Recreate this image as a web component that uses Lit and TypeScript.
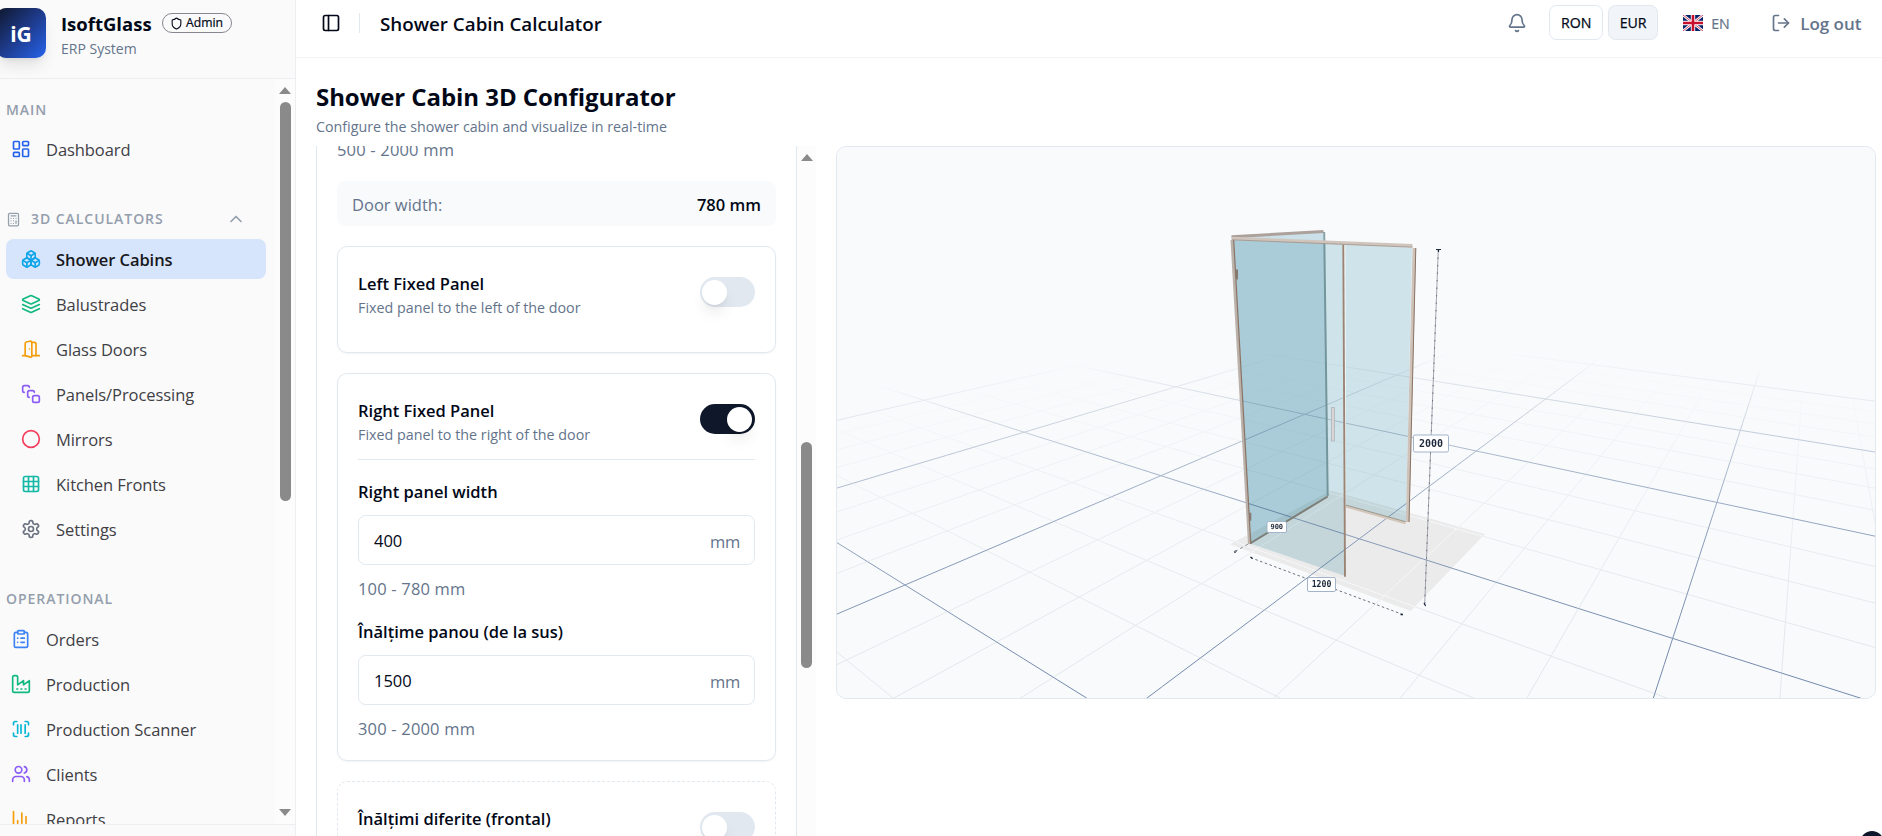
import { LitElement, html, css, svg } from "lit";
import { customElement, state } from "lit/decorators.js";
import { classMap } from "lit/directives/class-map.js";

const ICONS: Record<string, any> = {
  dashboard: svg`<rect width="7" height="9" x="3" y="3" rx="1"/><rect width="7" height="5" x="14" y="3" rx="1"/><rect width="7" height="9" x="14" y="12" rx="1"/><rect width="7" height="5" x="3" y="16" rx="1"/>`,
  calculator: svg`<rect width="16" height="20" x="4" y="2" rx="2"/><path d="M8 6h8M16 14v4M16 10h.01M12 10h.01M8 10h.01M12 14h.01M8 14h.01M12 18h.01M8 18h.01"/>`,
  boxes: svg`<path d="M2.97 12.92A2 2 0 0 0 2 14.63v3.24a2 2 0 0 0 .97 1.71l3 1.8a2 2 0 0 0 2.06 0L12 19v-5.5l-5-3-4.03 2.42Z"/><path d="m7 16.5-4.74-2.85"/><path d="m7 16.5 5-3"/><path d="M7 16.5v5.17"/><path d="M12 13.5V19l3.97 2.38a2 2 0 0 0 2.06 0l3-1.8a2 2 0 0 0 .97-1.71v-3.24a2 2 0 0 0-.97-1.71L17 10.5l-5 3Z"/><path d="m17 16.5-5-3"/><path d="m17 16.5 4.74-2.85"/><path d="M17 16.5v5.17"/><path d="M7.97 4.42A2 2 0 0 0 7 6.13v4.37l5 3 5-3V6.13a2 2 0 0 0-.97-1.71l-3-1.8a2 2 0 0 0-2.06 0l-3 1.8Z"/><path d="M12 8 7.26 5.15"/><path d="m12 8 4.74-2.85"/><path d="M12 13.5V8"/>`,
  layers: svg`<path d="m12.83 2.18a2 2 0 0 0-1.66 0L2.6 6.08a1 1 0 0 0 0 1.83l8.58 3.91a2 2 0 0 0 1.66 0l8.58-3.9a1 1 0 0 0 0-1.83Z"/><path d="m22 17.65-9.17 4.16a2 2 0 0 1-1.66 0L2 17.65"/><path d="m22 12.65-9.17 4.16a2 2 0 0 1-1.66 0L2 12.65"/>`,
  door: svg`<path d="M13 4h3a2 2 0 0 1 2 2v14"/><path d="M2 20h3"/><path d="M13 20h9"/><path d="M10 12v.01"/><path d="M13 4.562v16.157a1 1 0 0 1-1.242.97L5 20V5.562a2 2 0 0 1 1.515-1.94l4-1A2 2 0 0 1 13 4.561Z"/>`,
  stack: svg`<path d="M4 10c-1.1 0-2-.9-2-2V4c0-1.1.9-2 2-2h4c1.1 0 2 .9 2 2"/><path d="M10 16c-1.1 0-2-.9-2-2v-4c0-1.1.9-2 2-2h4c1.1 0 2 .9 2 2"/><rect width="8" height="8" x="14" y="14" rx="2"/>`,
  circle: svg`<circle cx="12" cy="12" r="10"/>`,
  grid: svg`<rect width="18" height="18" x="3" y="3" rx="2"/><path d="M3 9h18M3 15h18M9 3v18M15 3v18"/>`,
  settings: svg`<path d="M12.22 2h-.44a2 2 0 0 0-2 2v.18a2 2 0 0 1-1 1.73l-.43.25a2 2 0 0 1-2 0l-.15-.08a2 2 0 0 0-2.73.73l-.22.38a2 2 0 0 0 .73 2.73l.15.1a2 2 0 0 1 1 1.72v.51a2 2 0 0 1-1 1.74l-.15.09a2 2 0 0 0-.73 2.73l.22.38a2 2 0 0 0 2.73.73l.15-.08a2 2 0 0 1 2 0l.43.25a2 2 0 0 1 1 1.73V20a2 2 0 0 0 2 2h.44a2 2 0 0 0 2-2v-.18a2 2 0 0 1 1-1.73l.43-.25a2 2 0 0 1 2 0l.15.08a2 2 0 0 0 2.73-.73l.22-.39a2 2 0 0 0-.73-2.73l-.15-.08a2 2 0 0 1-1-1.74v-.5a2 2 0 0 1 1-1.74l.15-.09a2 2 0 0 0 .73-2.73l-.22-.38a2 2 0 0 0-2.73-.73l-.15.08a2 2 0 0 1-2 0l-.43-.25a2 2 0 0 1-1-1.73V4a2 2 0 0 0-2-2z"/><circle cx="12" cy="12" r="3"/>`,
  clipboard: svg`<rect width="8" height="4" x="8" y="2" rx="1"/><path d="M16 4h2a2 2 0 0 1 2 2v14a2 2 0 0 1-2 2H6a2 2 0 0 1-2-2V6a2 2 0 0 1 2-2h2M12 11h4M12 16h4M8 11h.01M8 16h.01"/>`,
  factory: svg`<path d="M2 20a2 2 0 0 0 2 2h16a2 2 0 0 0 2-2V8l-7 5V8l-7 5V4a2 2 0 0 0-2-2H4a2 2 0 0 0-2 2Z"/><path d="M17 18h1M12 18h1M7 18h1"/>`,
  scanner: svg`<path d="M3 7V5a2 2 0 0 1 2-2h2"/><path d="M17 3h2a2 2 0 0 1 2 2v2"/><path d="M21 17v2a2 2 0 0 1-2 2h-2"/><path d="M7 21H5a2 2 0 0 1-2-2v-2"/><path d="M8 7v10M12 7v10M17 7v10"/>`,
  users: svg`<path d="M16 21v-2a4 4 0 0 0-4-4H6a4 4 0 0 0-4 4v2"/><circle cx="9" cy="7" r="4"/><path d="M22 21v-2a4 4 0 0 0-3-3.87"/><path d="M16 3.13a4 4 0 0 1 0 7.75"/>`,
  chart: svg`<path d="M3 3v16a2 2 0 0 0 2 2h16"/><path d="M18 17V9M13 17V5M8 17v-3"/>`,
  panel: svg`<rect width="18" height="18" x="3" y="3" rx="2"/><path d="M9 3v18"/>`,
  bell: svg`<path d="M10.268 21a2 2 0 0 0 3.464 0"/><path d="M3.262 15.326A1 1 0 0 0 4 17h16a1 1 0 0 0 .74-1.673C19.41 13.956 18 12.499 18 8A6 6 0 0 0 6 8c0 4.499-1.411 5.956-2.738 7.326"/>`,
  logout: svg`<path d="M9 21H5a2 2 0 0 1-2-2V5a2 2 0 0 1 2-2h4"/><path d="m16 17 5-5-5-5"/><path d="M21 12H9"/>`,
  shield: svg`<path d="M20 13c0 5-3.5 7.5-7.66 8.95a1 1 0 0 1-.67-.01C7.5 20.5 4 18 4 13V6a1 1 0 0 1 1-1c2 0 4.5-1.2 6.24-2.72a1.17 1.17 0 0 1 1.52 0C14.51 3.81 17 5 19 5a1 1 0 0 1 1 1z"/>`,
  chevronUp: svg`<path d="m18 15-6-6-6 6"/>`,
};

const icon = (name: string, color = "currentColor", size = 20) => html`<svg
  class="icon" width=${size} height=${size} viewBox="0 0 24 24" fill="none"
  stroke=${color} stroke-width="2" stroke-linecap="round" stroke-linejoin="round">${ICONS[name]}</svg>`;

type Item = { icon: string; color: string; label: string };

const CALCULATORS: Item[] = [
  { icon: "boxes", color: "#0ea5e9", label: "Shower Cabins" },
  { icon: "layers", color: "#10b981", label: "Balustrades" },
  { icon: "door", color: "#f59e0b", label: "Glass Doors" },
  { icon: "stack", color: "#8b5cf6", label: "Panels/Processing" },
  { icon: "circle", color: "#f43f5e", label: "Mirrors" },
  { icon: "grid", color: "#14b8a6", label: "Kitchen Fronts" },
  { icon: "settings", color: "#6b7280", label: "Settings" },
];

const OPERATIONAL: Item[] = [
  { icon: "clipboard", color: "#3b82f6", label: "Orders" },
  { icon: "factory", color: "#10b981", label: "Production" },
  { icon: "scanner", color: "#06b6d4", label: "Production Scanner" },
  { icon: "users", color: "#8b5cf6", label: "Clients" },
  { icon: "chart", color: "#f59e0b", label: "Reports" },
];

type Pt = [number, number];

/* Projective map from the unit square onto a quadrilateral (p00, p10, p11, p01). */
function projector(a: Pt, b: Pt, c: Pt, d: Pt) {
  const sx = a[0] - b[0] + c[0] - d[0];
  const sy = a[1] - b[1] + c[1] - d[1];
  const dx1 = b[0] - c[0], dx2 = d[0] - c[0];
  const dy1 = b[1] - c[1], dy2 = d[1] - c[1];
  const det = dx1 * dy2 - dx2 * dy1;
  const g = (sx * dy2 - dx2 * sy) / det;
  const h = (dx1 * sy - sx * dy1) / det;
  return (u: number, v: number): [number, number, number] => {
    const w = g * u + h * v + 1;
    return [
      ((b[0] - a[0] + g * b[0]) * u + (d[0] - a[0] + h * d[0]) * v + a[0]) / w,
      ((b[1] - a[1] + g * b[1]) * u + (d[1] - a[1] + h * d[1]) * v + a[1]) / w,
      w,
    ];
  };
}

const project = projector([905, 585], [1558.1, 991.4], [1740.3, 430.3], [1396.7, 375]);
/* Floor coordinates count whole sections; the reference square spans i 2..4 and j 0..3. */
const floor = (i: number, j: number) => project((i - 2) / 2, j / 3);

function floorLine(alongI: boolean, k: number) {
  const pts: string[] = [];
  for (let t = -8; t <= 14; t += 0.125) {
    const [x, y, w] = alongI ? floor(t, k) : floor(k, t);
    if (w > 0.05 && Math.abs(x) < 6000 && y < 4000 && y > 300) pts.push(`${x.toFixed(1)},${y.toFixed(1)}`);
  }
  return pts.join(" ");
}

const MAJOR: string[] = [];
const MINOR: string[] = [];
for (let n = -16; n <= 40; n++) {
  const target = n % 4 === 0 ? MAJOR : MINOR;
  target.push(floorLine(true, n / 4), floorLine(false, n / 4));
}

@customElement("app-root")
export class AppRoot extends LitElement {
  @state() private currency = "EUR";
  @state() private leftPanel = false;
  @state() private rightPanel = true;

  static styles = css`
    :host { display: block; height: 100vh; overflow: hidden; background: #fff; color: #020817;
      font-family: "Open Sans", "Noto Sans", sans-serif; font-size: 16.5px; line-height: 24px; }
    * { box-sizing: border-box; }
    .icon { display: block; flex: none; }
    .app { display: grid; grid-template-columns: 296px 1fr; height: 836px; overflow: hidden; position: relative; }
    .sidebar { background: #fafafa; border-right: 1px solid #eceef2; display: grid; grid-template-rows: 79px 1fr 12px; min-height: 0; overflow: hidden; }
    .brand { display: flex; border-bottom: 1px solid #eceef2; padding-top: 8px; }
    .logo { width: 50px; height: 50px; margin-left: -4px; border-radius: 10px; background: linear-gradient(135deg, #0f172a, #1e3a8a 50%, #2563eb);
      color: #fff; font-weight: 700; font-size: 21px; padding-top: 1px; display: flex; align-items: center; justify-content: center; box-shadow: 0 10px 15px -3px #0000001a, 0 4px 6px -4px #0000001a; }
    .brand-text { margin-left: 15px; padding-top: 3px; }
    .brand-row { display: flex; align-items: center; height: 26px; }
    .brand-name { font-weight: 700; font-size: 18.5px; letter-spacing: 0; }
    .badge { margin-left: 10px; margin-top: -2px; height: 20px; width: 70px; border: 1px solid #85888f; border-radius: 10px; display: flex; align-items: center; justify-content: center; gap: 3px; font-size: 12.2px; font-weight: 500; -webkit-text-stroke: 0.2px; }
    .brand-sub { font-size: 14px; line-height: 20px; color: #64748b; padding-top: 2px; }
    .nav-wrap { display: grid; grid-template-columns: 1fr 20px; min-height: 0; overflow: hidden; }
    .nav { padding-left: 6px; min-height: 0; overflow: hidden; display: flex; flex-direction: column; }
    .section { color: #949eac; font-size: 14px; font-weight: 600; letter-spacing: 0.95px; height: 20px; line-height: 20px; flex: none; display: flex; align-items: center; }
    .section.main { margin-top: 21px; }
    .section.calc { margin-top: 40px; }
    .section.calc span { margin-left: 10px; flex: 1; }
    .section.calc .icon:last-child { margin-right: 29px; }
    .section.oper { margin-top: 40px; }
    .items { display: flex; flex-direction: column; gap: 5px; flex: none; }
    .item { height: 40px; display: flex; align-items: center; padding-left: 5px; color: #3f3f46; letter-spacing: -0.07px; }
    .item span { margin-left: 15px; padding-top: 2px; white-space: nowrap; }
    .main-items { margin-top: 9px; }
    .calc-items { margin-top: 10px; width: 260px; }
    .calc-items .item { padding-left: 15px; border-radius: 7.5px; }
    .oper-items { margin-top: 10px; }
    .item.active { background: #d7e5fc; color: #18181b; font-weight: 600; }
    .scrollbar { background: #fcfcfc; display: flex; flex-direction: column; align-items: center; }
    .arrow-up, .arrow-down { width: 0; height: 0; border-left: 6.5px solid transparent; border-right: 6.5px solid transparent; flex: none; }
    .arrow-up { border-bottom: 7px solid #8a8a8a; }
    .arrow-down { border-top: 7px solid #8a8a8a; }
    .thumb { width: 11px; border-radius: 6px; background: #8a8a8a; flex: none; }
    .nav-wrap .arrow-up { margin-top: 8px; }
    .nav-wrap .thumb { margin-top: 8px; height: 399px; }
    .nav-wrap .arrow-down { margin-top: auto; margin-bottom: 8px; }
    .side-foot { border-top: 1px solid #eceef2; }

    .content { display: grid; grid-template-rows: 58px 1fr; min-width: 0; min-height: 0; }
    .topbar { border-bottom: 1px solid #f1f2f5; display: flex; align-items: center; padding: 0 20.5px 12px 25px; }
    .sep { width: 1px; height: 20px; background: #e2e8f0; margin: 0 20px 0 18px; }
    .page-title { font-size: 18.8px; font-weight: 600; flex: 1; padding-top: 2px; }
    .muted { color: #64748b; }
    .cur { height: 35px; border: 1px solid #e2e8f0; border-radius: 7.5px; font-size: 14.2px; font-weight: 500; display: flex; align-items: center; justify-content: center; background: #fff; padding-top: 1.5px; -webkit-text-stroke: 0.25px; }
    .cur.ron { width: 54px; margin-left: 22px; }
    .cur.eur { width: 50px; margin-left: 5px; }
    .cur.on { background: #f1f5f9; }
    .flag { width: 20px; height: 16px; margin-left: 25px; display: block; }
    .lang { margin-left: 8px; font-size: 14.2px; width: 19px; padding-top: 2px; -webkit-text-stroke: 0.2px; }
    .out { display: flex; align-items: center; margin-left: 41px; font-weight: 600; font-size: 17px; }
    .out span { margin-left: 9px; padding-top: 2px; }

    .page { display: grid; grid-template-rows: 88px 1fr; padding-left: 20px; min-height: 0; }
    .h1 { font-size: 24px; font-weight: 700; line-height: 32px; margin-top: 23px; letter-spacing: -0.06px; }
    .sub { font-size: 14.25px; line-height: 20px; color: #64748b; margin-top: 4px; }
    .cols { display: grid; grid-template-columns: 500px 1040px; gap: 20px; min-height: 0; overflow: hidden; align-items: start; }
    .form-wrap { display: grid; grid-template-columns: 481px 19px; height: 690px; overflow: hidden; }
    .form { border-left: 1px solid #e2e8f0; border-right: 1px solid #e2e8f0; padding: 0 20px; overflow: hidden; display: flex; flex-direction: column; }
    .form > * { flex: none; }
    .hint { color: #64748b; letter-spacing: 0.18px; }
    .form > .hint { margin-top: -8px; }
    .door { margin-top: 19px; height: 45px; background: #f8fafc; border-radius: 8px; display: flex; align-items: center; justify-content: space-between; padding: 2px 15px 0; }
    .door b { font-weight: 600; }
    .card { border: 1px solid #e2e8f0; border-radius: 10px; margin-top: 20px; padding: 25px 20px 0; box-shadow: 0 1px 2px #0000000d; }
    .card.left { height: 107px; }
    .card.right { height: 388px; }
    .card.dashed { border-style: dashed; height: 110px; box-shadow: none; }
    .head { display: flex; justify-content: space-between; }
    .title { font-weight: 600; }
    .desc { font-size: 14.3px; line-height: 22px; color: #64748b; padding-top: 1px; }
    .switch { width: 55px; height: 30px; border-radius: 15px; background: #e2e8f0; padding: 2.5px 2px; display: flex; margin-top: 5px; }
    .switch.on { background: #0f172a; justify-content: flex-end; padding-right: 3px; }
    .knob { width: 25px; height: 25px; border-radius: 50%; background: #fff; box-shadow: 0 10px 15px -3px #0000001a, 0 4px 6px -4px #0000001a; }
    .rule { height: 1px; background: #e2e8f0; margin: 13px 0 20px; }
    .label { font-weight: 600; line-height: 24px; }
    .input { height: 50px; border: 1px solid #e2e8f0; border-radius: 7.5px; margin: 11px 0 12px; display: flex; align-items: center; justify-content: space-between; padding: 2px 14px 0 15px; }
    .input .muted { padding-top: 1px; letter-spacing: -0.3px; }
    .gap { height: 19px; }
    .track { background: #fcfcfc; display: flex; flex-direction: column; align-items: center; }
    .track .arrow-up { margin-top: 8px; }
    .track .thumb { margin-top: 281px; height: 226px; }
    .viewer { height: 553px; border: 1px solid #e2e8f0; border-radius: 10px; overflow: hidden; background: #f8fafc; }
    .scene { display: block; width: 1038px; height: 551px; isolation: isolate; background: #f8fafc; }
    .glass { fill: #d5e9ed; mix-blend-mode: multiply; }
    .glass.side { fill: #d1e5ec; }
    .major { fill: none; stroke: url(#majorFade); stroke-width: 1; }
    .minor { fill: none; stroke: url(#minorFade); stroke-width: 1; }
    .onfloor { fill: none; stroke: #fbfcfe; stroke-width: 1; stroke-dasharray: 2 1; }
    .tag { fill: #fff; stroke: #a3b3ca; }
    .tagtext { font-family: "DejaVu Sans Mono", "Liberation Mono", monospace; font-weight: 700; fill: #1e293b; text-anchor: middle; }
    .fab { position: absolute; width: 24px; height: 24px; border-radius: 50%; background: #0f172a; left: 1860px; top: 831px; }
  `;

  private item(it: Item, active = false) {
    return html`<div class=${classMap({ item: true, active })}>${icon(it.icon, it.color)}<span>${it.label}</span></div>`;
  }

  private toggle(on: boolean, flip: () => void) {
    return html`<div class=${classMap({ switch: true, on })} @click=${flip}><div class="knob"></div></div>`;
  }

  private field(label: string, value: string, hint: string) {
    return html`<div class="label">${label}</div>
      <div class="input"><span>${value}</span><span class="muted">mm</span></div>
      <div class="hint">${hint}</div>`;
  }

  private tag(x: number, y: number, w: number, h: number, size: number, text: string) {
    return svg`<rect class="tag" x=${x} y=${y} width=${w} height=${h} rx="1.5"/>
      <text class="tagtext" x=${x + w / 2} y=${y + h / 2 + size * 0.3} font-size=${size}>${text}</text>`;
  }

  private scene() {
    return html`<svg class="scene" viewBox="837 147 1038 551">
      <defs>
        <radialGradient id="majorFade" gradientUnits="userSpaceOnUse" cx="1400" cy="4250" r="3900">
          <stop offset="0" stop-color="#7389ab"/><stop offset="0.92" stop-color="#7389ab"/>
          <stop offset="0.955" stop-color="#8a9cb9"/><stop offset="0.975" stop-color="#adbacd"/>
          <stop offset="0.988" stop-color="#d2d9e3"/><stop offset="1" stop-color="#f8fafc"/>
        </radialGradient>
        <radialGradient id="minorFade" gradientUnits="userSpaceOnUse" cx="1400" cy="4250" r="3900">
          <stop offset="0" stop-color="#e3e5e9"/><stop offset="0.93" stop-color="#e4e7eb"/>
          <stop offset="0.97" stop-color="#edf0f3"/><stop offset="1" stop-color="#f8fafc"/>
        </radialGradient>
        <clipPath id="tray"><polygon points="1230,544.3 1331,490.5 1485,534 1410.7,611"/></clipPath>
      </defs>
      ${MINOR.map((p) => svg`<polyline class="minor" points=${p}/>`)}
      <polygon points="1230,544.3 1331,490.5 1485,534 1410.7,611" fill="#ebebeb"/>
      <g clip-path="url(#tray)">${MINOR.map((p) => svg`<polyline class="onfloor" points=${p}/>`)}</g>
      ${MAJOR.map((p) => svg`<polyline class="major" points=${p}/>`)}
      <polygon class="glass side" points="1232,237.5 1324,232 1327.5,496 1250,543.5"/>
      <path d="M1231.5 236.8 1323.5 231.5" stroke="#ada19c" stroke-width="3"/>
      <path d="M1250 543.5 1327.7 496.5" stroke="#94897f" stroke-width="2"/>
      <path d="M1324.2 232 1327.7 496" stroke="#8aa3a8" stroke-width="2"/>
      <polygon class="glass" points="1345,244.5 1412,247.5 1406,522 1345.7,505.5"/>
      <path d="M1345.7 506.3 1405.5 523" stroke="#d3c6ba" stroke-width="2.4"/>
      <path d="M1345.7 505 1405.5 521.7" stroke="#8e8c80" stroke-width="0.8"/>
      <polygon class="glass" points="1233,240 1343.5,244 1345,576 1250,543.5"/>
      <path d="M1235.5 269.5h2.5v10h-2.5zM1248.7 512.7h2.6v8h-2.6z" fill="#857a72"/>
      <path d="M1232 240 1249.5 544" stroke="#bbb2ab" stroke-width="3"/>
      <path d="M1233.7 240 1250.8 544" stroke="#8b7465" stroke-width="1.2"/>
      <path d="M1345 245 1345.6 505" stroke="#eef6f8" stroke-width="1"/>
      <path d="M1343.3 244.5 1345 576.7" stroke="#9c8475" stroke-width="1.9"/>
      <path d="M1414.3 248 1407.6 522" stroke="#cec2b9" stroke-width="3.6"/>
      <path d="M1415.8 248 1409 522" stroke="#8b7465" stroke-width="1"/>
      <path d="M1231.7 238.3 1412.5 245.7" stroke="#cfc5bd" stroke-width="3.2"/>
      <path d="M1231.7 239.8 1412.5 247.2" stroke="#a08f84" stroke-width="0.8"/>
      <rect x="1331.5" y="407.5" width="3" height="33.5" fill="#d9d5d6" stroke="#a9b0b5" stroke-width="0.7"/>
      <path d="M1438.3 250 1424.7 605" stroke="#a3a6ae" stroke-width="1"/>
      <path d="M1438.3 250 1424.7 605" stroke="#6b7080" stroke-width="1" stroke-dasharray="1.5 6"/>
      <path d="M1436 249.5h5M1438.5 249v3M1424 603l1.6 3" stroke="#1e293b" stroke-width="1.2"/>
      <path d="M1250.7 557.7 1402.3 614.3" stroke="#5b606b" stroke-width="0.9" stroke-dasharray="2.5 2.5"/>
      <path d="M1250.5 557l2 1.5M1400.5 614.5h2.5M1235 553v-1.5l2-1" stroke="#1e293b" stroke-width="1.3" fill="none"/>
      <path d="M1235 551.7 1249 543.5" stroke="#8b8f98" stroke-width="1" stroke-dasharray="3 3"/>
      ${this.tag(1413.5, 435, 35, 17, 10, "2000")}
      ${this.tag(1307.5, 577.5, 28, 14, 8.2, "1200")}
      ${this.tag(1267, 521.5, 19.5, 11, 7, "900")}
    </svg>`;
  }

  render() {
    return html`<div class="app">
      <div class="sidebar">
        <div class="brand">
          <div class="logo">iG</div>
          <div class="brand-text">
            <div class="brand-row"><span class="brand-name">IsoftGlass</span>
              <span class="badge">${icon("shield", "#020817", 13)}<span>Admin</span></span></div>
            <div class="brand-sub">ERP System</div>
          </div>
        </div>
        <div class="nav-wrap">
          <div class="nav">
            <div class="section main">MAIN</div>
            <div class="items main-items">${this.item({ icon: "dashboard", color: "#2563eb", label: "Dashboard" })}</div>
            <div class="section calc">${icon("calculator", "currentColor", 15)}<span>3D CALCULATORS</span>${icon("chevronUp")}</div>
            <div class="items calc-items">${CALCULATORS.map((it, n) => this.item(it, n === 0))}</div>
            <div class="section oper">OPERATIONAL</div>
            <div class="items oper-items">${OPERATIONAL.map((it) => this.item(it))}</div>
          </div>
          <div class="scrollbar"><div class="arrow-up"></div><div class="thumb"></div><div class="arrow-down"></div></div>
        </div>
        <div class="side-foot"></div>
      </div>
      <div class="content">
        <div class="topbar">
          ${icon("panel", "#020817")}<div class="sep"></div>
          <div class="page-title">Shower Cabin Calculator</div>
          ${icon("bell", "#64748b")}
          <div class=${classMap({ cur: true, ron: true, on: this.currency === "RON" })} @click=${() => (this.currency = "RON")}>RON</div>
          <div class=${classMap({ cur: true, eur: true, on: this.currency === "EUR" })} @click=${() => (this.currency = "EUR")}>EUR</div>
          <svg class="flag" viewBox="0 0 20 16">
            <rect width="20" height="16" fill="#012169"/>
            <path d="M0 0 20 16M20 0 0 16" stroke="#fff" stroke-width="2.6"/>
            <path d="M0 0 20 16M20 0 0 16" stroke="#d8455f" stroke-width="1"/>
            <path d="M10 0v16M0 8h20" stroke="#fff" stroke-width="4.4"/>
            <path d="M10 0v16M0 8h20" stroke="#c8102e" stroke-width="2.6"/>
          </svg>
          <div class="lang muted">EN</div>
          <div class="out muted">${icon("logout")}<span>Log out</span></div>
        </div>
        <div class="page">
          <div>
            <div class="h1">Shower Cabin 3D Configurator</div>
            <div class="sub">Configure the shower cabin and visualize in real-time</div>
          </div>
          <div class="cols">
            <div class="form-wrap">
              <div class="form">
                <div class="hint">500 - 2000 mm</div>
                <div class="door"><span class="muted">Door width:</span><b>780 mm</b></div>
                <div class="card left">
                  <div class="head">
                    <div><div class="title">Left Fixed Panel</div><div class="desc">Fixed panel to the left of the door</div></div>
                    ${this.toggle(this.leftPanel, () => (this.leftPanel = !this.leftPanel))}
                  </div>
                </div>
                <div class="card right">
                  <div class="head">
                    <div><div class="title">Right Fixed Panel</div><div class="desc">Fixed panel to the right of the door</div></div>
                    ${this.toggle(this.rightPanel, () => (this.rightPanel = !this.rightPanel))}
                  </div>
                  <div class="rule"></div>
                  ${this.field("Right panel width", "400", "100 - 780 mm")}
                  <div class="gap"></div>
                  ${this.field("Înălțime panou (de la sus)", "1500", "300 - 2000 mm")}
                </div>
                <div class="card dashed">
                  <div class="head"><div class="title">Înălțimi diferite (frontal)</div>${this.toggle(false, () => {})}</div>
                </div>
              </div>
              <div class="track"><div class="arrow-up"></div><div class="thumb"></div></div>
            </div>
            <div class="viewer">${this.scene()}</div>
          </div>
        </div>
      </div>
      <div class="fab"></div>
    </div>`;
  }
}
